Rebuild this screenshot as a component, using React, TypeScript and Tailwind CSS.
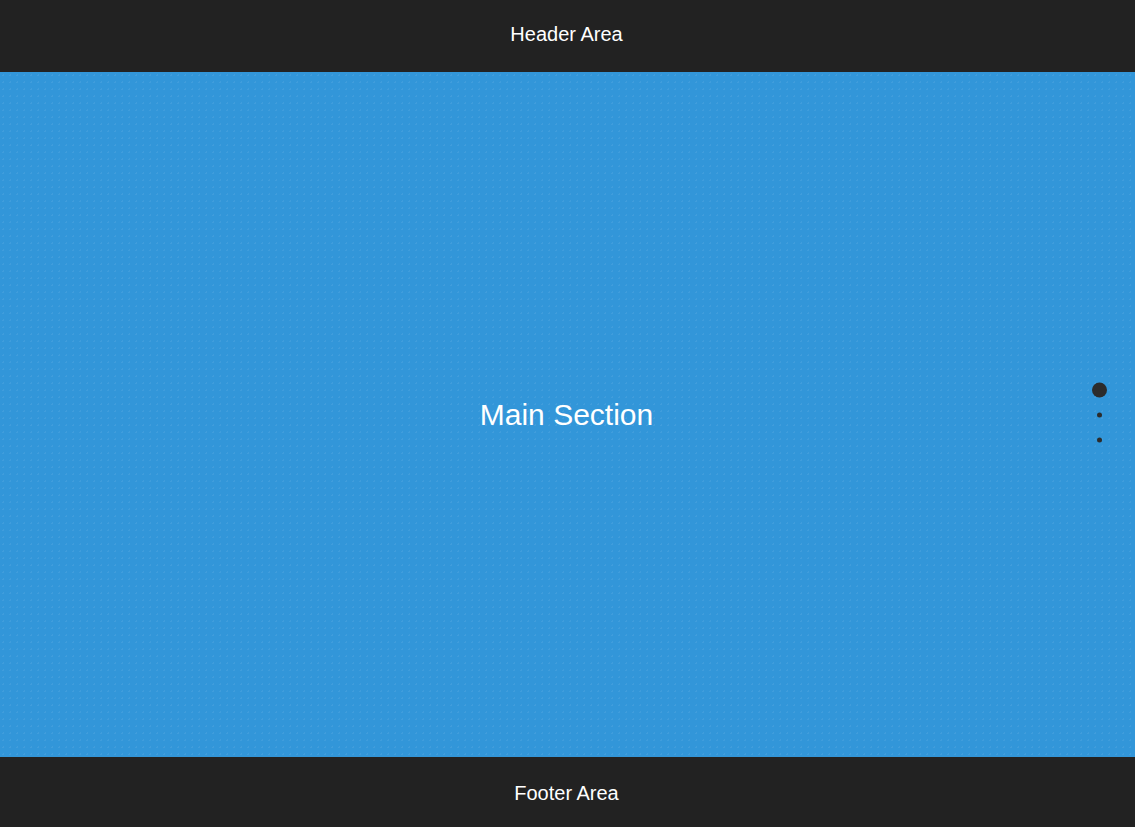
const dots = [true, false, false];

export default function App() {
  return (
    <div className="flex h-screen flex-col font-['Liberation_Sans',Arial,sans-serif] text-white">
      <header className="flex h-[72px] shrink-0 items-center justify-center bg-[#222222] pb-[4px] pr-[2px] text-[20px]">
        Header Area
      </header>
      <main className="relative flex flex-1 items-center justify-center bg-[#3296d9] bg-[radial-gradient(rgba(255,255,255,0.07)_1px,transparent_1px)] bg-[size:7px_7px] pr-[2px] text-[30px]">
        Main Section
        {/* section nav */}
        <nav className="absolute right-[28px] top-1/2 flex w-4 -translate-y-1/2 flex-col items-center">
          {dots.map((active, i) => (
            <div key={i} className="flex h-[25px] w-4 items-center justify-center">
              <span
                className={
                  active
                    ? "block h-[15px] w-[15px] rounded-full bg-[#2c2c2c]"
                    : "block h-[5px] w-[5px] rounded-full bg-[#2c2c2c]"
                }
              />
            </div>
          ))}
        </nav>
      </main>
      <footer className="flex h-[70px] shrink-0 items-center justify-center bg-[#222222] pt-[2px] pr-[2px] text-[20px]">
        Footer Area
      </footer>
    </div>
  );
}
